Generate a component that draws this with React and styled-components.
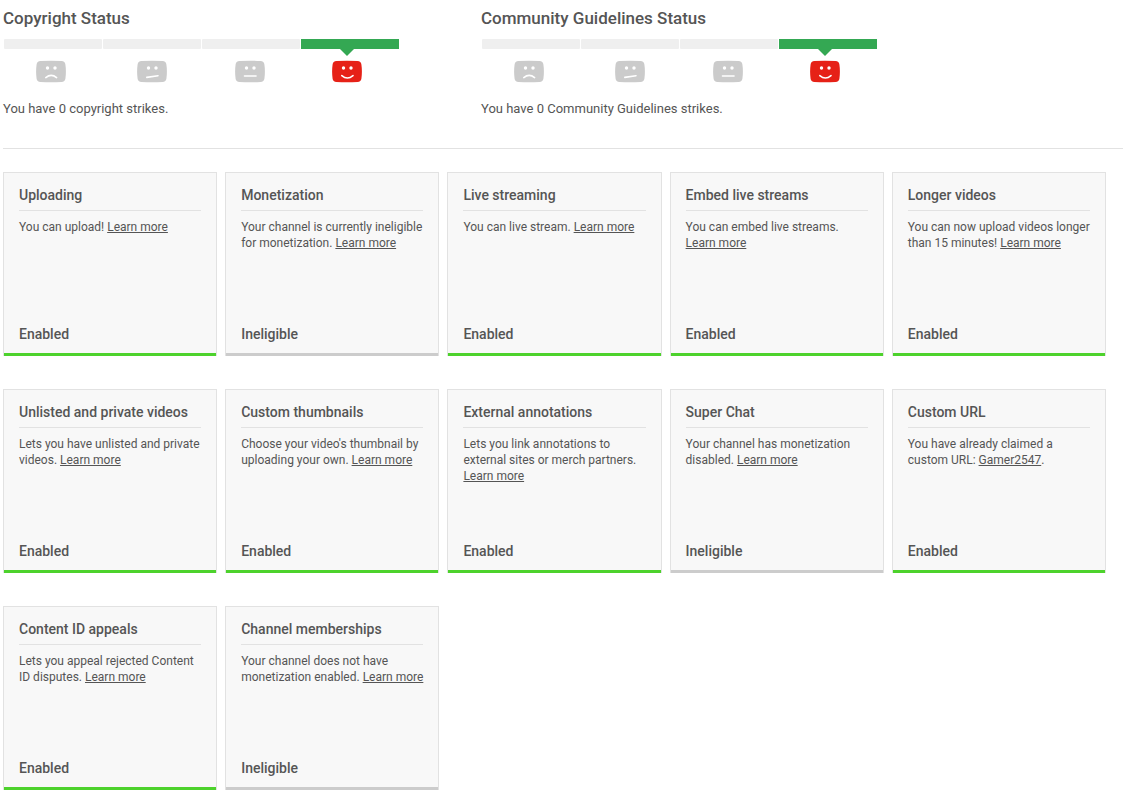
import React from "react";
import styled, { createGlobalStyle } from "styled-components";

const GlobalStyle = createGlobalStyle`
  * { box-sizing: border-box; }
  body {
    margin: 0;
    background: #fff;
    color: #555;
    font-family: Roboto, "Liberation Sans", sans-serif;
    font-size: 13px;
  }
  h2, h3, p, ul { margin: 0; padding: 0; }
`;

const Page = styled.main`
  padding: 8px 24px 8px 3px;
`;

const StatusRow = styled.section`
  display: flex;
  flex-wrap: wrap;
  gap: 24px 80px;
  padding-bottom: 30px;
  border-bottom: 1px solid #e2e2e2;
`;

const Status = styled.div`
  width: 398px;
`;

const StatusTitle = styled.h2`
  font-size: 17px;
  font-weight: 500;
  line-height: 20px;
`;

const Meter = styled.div`
  display: grid;
  grid-template-columns: repeat(4, 98px);
  gap: 1px;
  margin: 11px 0 0 1px;
`;

const Segment = styled.span`
  height: 10px;
  border-radius: ${(p) => (p.$active ? 0 : 1)}px;
  background: ${(p) => (p.$active ? "#34a853" : "#efefef")};
`;

const Faces = styled.div`
  display: grid;
  grid-template-columns: 101px 98px 97px 30px;
  margin: 11px 0 0 33px;
`;

const FaceSlot = styled.span`
  position: relative;
  height: 23px;
`;

const Pointer = styled.span`
  position: absolute;
  top: -11px;
  left: 8px;
  border: 7px solid transparent;
  border-top-color: #34a853;
  border-bottom: 0;
`;

const StatusText = styled.p`
  margin-top: 17px;
  line-height: 18px;
`;

const Features = styled.section`
  display: grid;
  grid-template-columns: repeat(5, minmax(0, 1fr));
  gap: 33px 8px;
  padding: 23px 17px 0 0;
`;

const Card = styled.article`
  display: flex;
  flex-direction: column;
  min-height: 184px;
  padding: 12px 15px 0;
  border: 1px solid #e2e2e2;
  border-bottom: 0;
  background: #f8f8f8;
`;

const CardTitle = styled.h3`
  padding-bottom: 5px;
  border-bottom: 1px solid #e2e2e2;
  font-size: 14px;
  font-weight: 500;
  line-height: 20px;
`;

const Description = styled.p`
  margin: 8px -2px 0 0;
  font-size: 12px;
  line-height: 16px;
`;

const Link = styled.a`
  color: inherit;
  text-decoration: underline;
`;

const State = styled.p`
  margin: auto -15px 0;
  padding: 0 15px 9px;
  border-bottom: 3px solid ${(p) => (p.$enabled ? "#4dd22c" : "#ccc")};
  font-size: 14px;
  font-weight: 500;
  line-height: 20px;
`;

const MOUTHS = {
  sad: "M9.8 17.6Q15.2 13.2 20.6 17.6",
  uneasy: "M9.8 17.4L21 15.7",
  neutral: "M9.5 16H21",
  happy: "M9.8 15.6Q15.4 20.4 21 15.6",
};

function Face({ mood }) {
  return (
    <svg width="30" height="23" viewBox="0 0 30 23" aria-hidden="true">
      <path
        d="M4.5 1.1Q15 .3 25.5 1.1Q29 1.3 29.4 4.5Q30.4 11.5 29.4 18.7Q29 21.7 25.5 21.9Q15 22.7 4.5 21.9Q1 21.7 .6 18.7Q-.4 11.5 .6 4.5Q1 1.3 4.5 1.1Z"
        fill={mood === "happy" ? "#e62117" : "#cbcbcb"}
      />
      <circle cx="11.5" cy="8" r="1.7" fill="#fff" />
      <circle cx="19" cy="8" r="1.7" fill="#fff" />
      <path d={MOUTHS[mood]} fill="none" stroke="#fff" strokeWidth="1.6" strokeLinecap="round" />
    </svg>
  );
}

function StatusBlock({ title, text }) {
  return (
    <Status>
      <StatusTitle>{title}</StatusTitle>
      <Meter>
        <Segment />
        <Segment />
        <Segment />
        <Segment $active />
      </Meter>
      <Faces>
        {Object.keys(MOUTHS).map((mood) => (
          <FaceSlot key={mood}>
            {mood === "happy" && <Pointer />}
            <Face mood={mood} />
          </FaceSlot>
        ))}
      </Faces>
      <StatusText>{text}</StatusText>
    </Status>
  );
}

const features = [
  { title: "Uploading", text: "You can upload!", enabled: true },
  { title: "Monetization", text: "Your channel is currently ineligible for monetization." },
  { title: "Live streaming", text: "You can live stream.", enabled: true },
  { title: "Embed live streams", text: "You can embed live streams.", enabled: true },
  { title: "Longer videos", text: "You can now upload videos longer than 15 minutes!", enabled: true },
  { title: "Unlisted and private videos", text: "Lets you have unlisted and private videos.", enabled: true },
  { title: "Custom thumbnails", text: "Choose your video's thumbnail by uploading your own.", enabled: true },
  { title: "External annotations", text: "Lets you link annotations to external sites or merch partners.", enabled: true },
  { title: "Super Chat", text: "Your channel has monetization disabled." },
  { title: "Custom URL", text: "You have already claimed a custom URL:", link: "Gamer2547", end: ".", enabled: true },
  { title: "Content ID appeals", text: "Lets you appeal rejected Content ID disputes.", enabled: true },
  { title: "Channel memberships", text: "Your channel does not have monetization enabled." },
];

export default function App() {
  return (
    <>
      <GlobalStyle />
      <Page>
        <StatusRow>
          <StatusBlock title="Copyright Status" text="You have 0 copyright strikes." />
          <StatusBlock
            title="Community Guidelines Status"
            text="You have 0 Community Guidelines strikes."
          />
        </StatusRow>
        <Features>
          {features.map(({ title, text, link = "Learn more", end, enabled }) => (
            <Card key={title}>
              <CardTitle>{title}</CardTitle>
              <Description>
                {text} <Link href="#">{link}</Link>
                {end}
              </Description>
              <State $enabled={enabled}>{enabled ? "Enabled" : "Ineligible"}</State>
            </Card>
          ))}
        </Features>
      </Page>
    </>
  );
}
